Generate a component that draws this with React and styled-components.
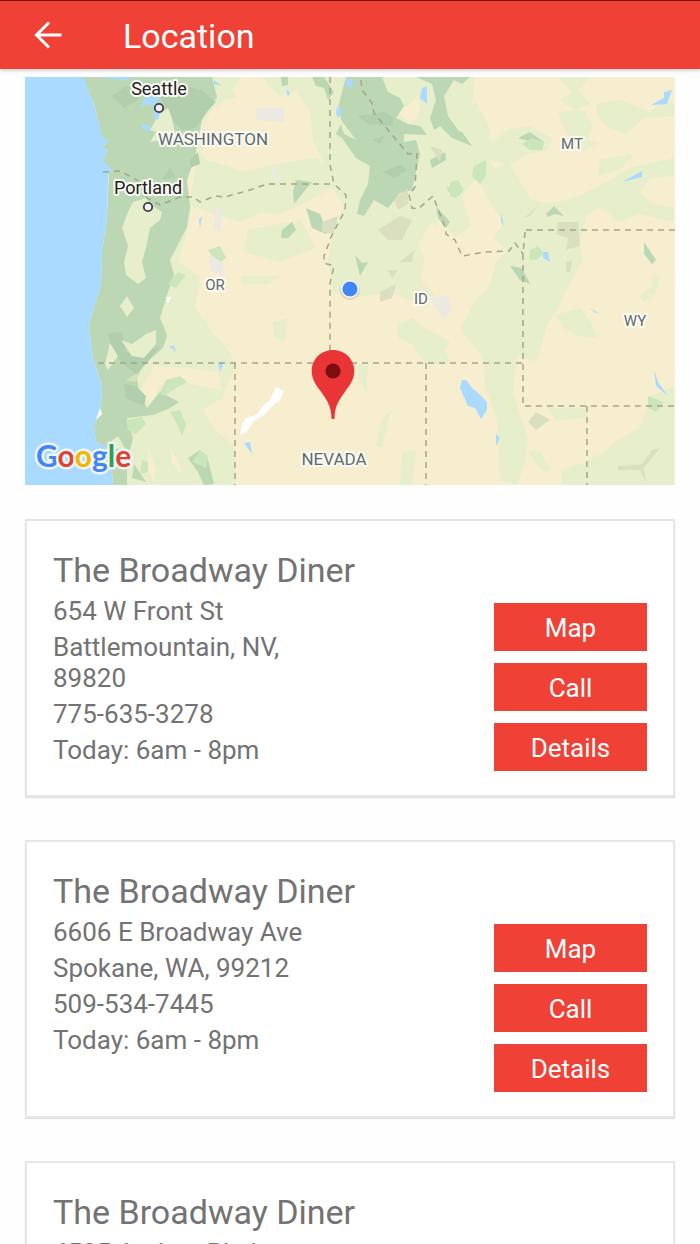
import React from 'react';
import styled, { createGlobalStyle } from 'styled-components';

const GlobalStyle = createGlobalStyle`
  * {
    box-sizing: border-box;
  }

  body {
    margin: 0;
    background: #fefefe;
    font-family: Roboto, 'Liberation Sans', sans-serif;
    color: #737373;
  }
`;

const Header = styled.header`
  display: flex;
  align-items: center;
  gap: 59px;
  height: 69px;
  padding: 0 32px;
  border-top: 1px solid #7d1713;
  background: #ef4136;
  box-shadow: 0 1px 4px rgba(0, 0, 0, 0.25);
`;

const BackButton = styled.button`
  display: flex;
  padding: 0;
  border: none;
  background: transparent;
  color: #fff;
  cursor: pointer;
`;

const HeaderTitle = styled.h1`
  margin: 0;
  padding-top: 2px;
  font-size: 34px;
  line-height: 40px;
  font-weight: 400;
  color: #fff;
`;

const Content = styled.main`
  padding: 8px 25px 42px;
`;

const Map = styled.svg`
  display: block;
  width: 100%;
  height: auto;
`;

const MapLabel = styled.text`
  font-family: Roboto, 'Liberation Sans', sans-serif;
  font-size: ${({ $size }) => $size}px;
  fill: ${({ $city }) => ($city ? '#202124' : '#5f6b6f')};
  stroke: #fbfbf3;
  stroke-width: 4px;
  stroke-linejoin: round;
  paint-order: stroke;
  text-anchor: middle;
`;

const MapLogo = styled.text`
  font-family: Lato, sans-serif;
  font-size: 30px;
  font-weight: 700;
  stroke: #eef5f2;
  stroke-width: 5px;
  stroke-linejoin: round;
  paint-order: stroke;
`;

const LocationList = styled.div`
  display: flex;
  flex-direction: column;
  gap: 43px;
  margin-top: 34px;
`;

const Card = styled.article`
  padding: 29px 26px 24px;
  border: 2px solid #e4e7e8;
  background: #fff;
  box-shadow: 0 1px 1px rgba(0, 0, 0, 0.12);
`;

const CardTitle = styled.h2`
  margin: 0 0 6px;
  font-size: 34px;
  line-height: 40px;
  font-weight: 400;
`;

const CardBody = styled.div`
  display: grid;
  grid-template-columns: 1fr 1fr;
`;

const Info = styled.div`
  display: flex;
  flex-direction: column;
  gap: 5px;
`;

const InfoLine = styled.p`
  margin: 0;
  font-size: 26px;
  line-height: 31px;
`;

const Actions = styled.div`
  display: flex;
  flex-direction: column;
  align-items: flex-end;
  gap: 12px;
  padding-top: 7px;
`;

const ActionButton = styled.button`
  width: 153px;
  height: 48px;
  padding: 3px 0 0;
  border: none;
  background: #ef4136;
  color: #fff;
  font-family: inherit;
  font-size: 26px;
  line-height: 31px;
  cursor: pointer;
`;

const locations = [
  {
    name: 'The Broadway Diner',
    street: '654 W Front St',
    city: 'Battlemountain, NV, 89820',
    phone: '775-635-3278',
    hours: 'Today: 6am - 8pm',
  },
  {
    name: 'The Broadway Diner',
    street: '6606 E Broadway Ave',
    city: 'Spokane, WA, 99212',
    phone: '509-534-7445',
    hours: 'Today: 6am - 8pm',
  },
  {
    name: 'The Broadway Diner',
    street: '4525 Andrea Blvd',
    city: 'Missoula, MT, 59808',
    phone: '406-555-0148',
    hours: 'Today: 6am - 8pm',
  },
];

// terrain, grouped by map colour
const lightGreen = [
  '212,77 242,77 232,90 236,97 224,100 210,112 204,128 212,140 200,152 206,160 222,164 245,172 268,166 300,160 318,158 335,184 318,196 300,205 280,214 262,212 240,222 215,214 192,206 186,235 178,262 200,277 195,308 213,332 228,350 236,364 222,398 203,410 215,430 235,446 235,485 120,485 120,360 170,260 190,200',
  '263,77 330,77 475,77 472,103 480,128 470,150 478,175 462,196 470,226 455,238 440,214 432,236 440,256 424,262 420,282 436,296 408,300 390,292 366,296 346,298 332,290 328,262 332,240 345,206 330,186 322,160 313,140 310,112 296,90 280,96 268,86',
  '558,77 590,77 578,90 590,104 574,110 560,100 572,92',
  '474,176 486,158 496,170 508,160 520,182 532,200 552,204 578,196 600,186 630,168 674,158 674,176 650,178 640,192 654,204 674,208 674,222 640,214 618,222 600,206 586,216 580,243 582,262 566,290 560,305 547,325 537,362 517,355 513,392 528,438 524,464 517,485 500,480 497,418 485,388 483,358 460,328 476,300 490,285 496,262 508,250 494,238 504,222 492,206 484,190',
  '596,104 620,100 650,112 664,100 674,104 674,116 644,118 626,134 610,128 598,118',
  '475,100 488,124 492,142 508,130 530,126 552,138 548,150 528,154 510,164 488,160 474,176 466,150',
  '558,112 584,110 592,126 588,140 598,142 584,152 566,134',
  '674,386 650,396 640,428 618,440 604,452 588,460 562,470 562,485 674,485',
  '548,408 588,408 586,418 556,420',
  '528,450 540,452 551,470 546,472 534,462',
  '397,325 412,318 432,332 450,342 444,352 452,364 426,364 412,344 398,338',
  '555,315 580,308 592,324 597,338 576,336 562,326',
  '392,409 382,420 376,446 382,448 386,430',
  '273,322 288,318 284,342 274,336',
  '358,364 368,366 366,392 358,378',
  '402,452 416,450 412,485 400,485',
  '240,276 280,276 268,284 244,284',
  '652,275 660,275 656,292 644,302 640,296 652,286',
  '248,230 300,220 316,248 280,262 244,252',
  '600,160 634,154 622,168 598,176',
];

const sand = [
  '154,366 186,368 218,372 222,390 200,386 176,380 160,386 150,404 140,392',
  '540,176 558,168 556,186 546,192',
  '484,104 498,108 504,112 488,114',
  '398,112 410,104 418,94 420,108 416,120 408,122',
  '148,446 156,470 154,484 148,470',
  '170,446 180,466 182,474 172,464',
  '340,120 352,133 344,128',
  '418,244 432,222 446,240 448,268 430,272',
  '540,425 560,420 570,432 588,436 588,462 560,468 545,458 530,440',
];

const forest = [
  '83,77 87,90 94,103 98,120 102,138 108,141 103,148 108,150 102,160 109,170 107,220 102,250 101,285 95,305 89,325 93,358 102,385 101,408 94,425 96,442 110,448 113,485 127,485 127,462 133,438 127,418 153,415 170,408 179,402 160,392 147,408 139,392 137,378 143,365 163,348 167,335 160,318 167,295 174,275 170,260 187,227 190,207 187,180 195,157 202,120 217,97 212,77',
  '346,77 382,77 388,92 400,98 404,106 396,118 408,124 420,126 427,135 404,134 404,142 416,140 420,154 416,172 412,190 400,193 388,208 374,200 364,216 357,214 360,200 368,184 370,166 356,158 342,138 336,134 342,122 338,108 342,92',
  '416,77 470,77 462,84 454,80 444,96 448,116 458,130 472,146 452,138 440,126 434,130 430,118 436,100 432,84',
  '312,77 324,77 334,92 328,100 324,88 316,86',
  '281,77 288,77 288,85 282,86',
  '306,208 320,214 324,224 334,222 326,234 312,228',
  '296,180 312,182 302,194 294,204 293,192',
  '282,230 292,222 296,230 288,238 281,238',
  '355,255 362,263 368,262 360,276',
  '436,206 450,222 446,228 438,218',
  '450,128 462,132 472,146 456,138',
  '518,138 530,132 544,142 542,150 532,142',
  '546,214 554,206 564,216 554,214 548,217',
  '510,266 522,268 530,284 520,280',
  '644,242 656,260 652,264 644,254',
  '430,160 445,152 446,160 432,168',
  '188,458 200,450 208,460 214,484 204,485 198,472',
  '134,464 146,482 132,478',
];

const darkForest = [
  '160,97 178,84 202,90 216,102 206,112 196,128 182,130 170,118 166,108',
  '112,96 126,86 142,92 138,100 124,108',
  '108,333 122,332 126,352 140,356 160,346 148,362 136,374 124,364 112,352',
  '124,384 136,386 146,396 144,406 126,398',
  '358,116 384,112 394,118 392,126 368,124',
  '372,140 384,136 380,144',
  '382,172 400,165 408,170 394,178',
  '190,160 198,152 200,164 190,168',
  '162,180 170,168 176,178',
];

const brightGreen = [
  '160,394 166,380 180,376 187,382 176,388 164,396',
  '126,420 142,417 146,424 136,434 128,430',
  '170,412 180,410 186,424 182,436 176,422',
  '192,462 200,450 208,456 206,468',
  '142,460 148,462 148,472 140,474',
  '450,182 458,180 464,190 456,198 450,196',
  '474,166 486,160 486,176 480,184 472,176',
  '446,186 460,190 460,196 448,192',
  '522,144 532,138 544,142 542,150 530,150',
  '530,250 538,246 544,254 536,260 529,259',
  '648,396 664,402 656,412 648,408',
  '208,250 220,246 226,258 218,264 212,256',
  '168,284 178,272 186,275 176,288',
];

const valleys = [
  '133,202 146,198 150,204 162,212 160,220 150,228 146,248 142,262 146,278 138,284 126,275 124,262 128,246 122,228 128,212',
  '158,116 168,108 172,118 176,138 150,142 156,132 150,130',
  '120,306 127,296 134,308 127,317',
  '121,340 132,344 146,334 156,330 156,344 144,358 132,356',
  '110,343 118,356 108,370 105,364',
  '338,116 350,132 356,140 344,134',
  '108,444 118,436 126,450 112,448',
];

const taupe = [
  '322,222 338,216 334,234 322,232',
  '378,230 400,216 412,220 402,240 388,240',
  '394,200 408,188 408,204 398,210',
  '430,146 442,150 440,162',
  '400,262 414,250 412,262',
  '558,222 578,222 580,246 566,250 568,238 556,234',
  '524,218 538,206 530,216',
  '536,412 550,420 536,430 528,422',
  '618,466 642,464 652,450 660,448 644,468 646,482 640,470 618,470',
  '126,380 138,373 136,382',
  '380,292 396,284 392,298 380,302',
  '388,270 398,270 392,278',
  '566,262 572,260 570,272 566,272',
];

const water = [
  '25,77 84,77 88,90 94,104 98,120 103,138 109,140 103,148 108,150 103,160 112,170 108,175 107,220 102,250 101,285 95,305 89,325 93,358 102,385 101,408 94,425 96,442 110,448 113,485 25,485',
  '100,77 130,77 128,80 112,79',
  '150,90 158,82 160,96 154,110 152,104 140,106',
  '142,124 150,126 150,132 142,128',
  '154,108 160,112 158,120 154,118',
  '214,80 222,86 214,84',
  '346,79 353,79 352,88 346,86',
  '286,90 290,92 288,97',
  '337,108 341,106 341,114 338,118 336,113',
  '422,88 427,86 427,104 420,98',
  '672,90 667,104 651,105 664,98 664,92',
  '642,171 642,177 622,182',
  '501,213 504,226 501,222',
  '543,252 548,252 550,262 543,258',
  '199,220 202,216 200,228',
  '462,380 466,380 472,388 479,394 487,402 487,410 481,419 475,408 468,406 460,388',
  '496,434 500,438 496,446',
  '218,362 224,362 220,372',
  '169,346 174,346 176,352',
  '244,443 250,442 252,454',
  '654,370 658,382 668,396 656,386',
  '590,308 600,314 594,312',
];

const urban = [
  '255,108 284,108 284,122 256,120',
  '216,208 222,208 220,232 214,228',
  '430,298 448,295 452,310 442,320 436,308',
  '210,254 224,264 222,276 210,270',
  '272,168 278,166 276,180 272,178',
];

const saltFlats = [
  '276,387 284,391 280,400 272,406 264,415 254,421 246,433 240,434 242,424 246,418 256,415 263,406 270,400',
  '100,408 102,414 96,420',
  '166,297 171,297 168,304',
];

const borders = [
  '103,172 120,171 137,180 147,198 160,205 180,197 193,197 200,202 215,196 225,197 250,190 267,184 332,184',
  '330,77 330,165 334,184 346,195 345,210 332,235 324,256 324,263 334,266 330,283 330,363',
  '98,363 523,363',
  '235,363 235,485',
  '426,363 426,485',
  '361,80 362,90 372,103 374,113 408,154 417,153 415,187 409,195 412,208 418,209 433,196 446,230 446,234 455,240 462,256 485,252 509,251 515,243 523,254',
  '526,230 675,230',
  '525,232 523,254 523,406 675,406',
  '587,406 587,485',
];

const Shapes = ({ items, fill }) => (
  <g fill={fill}>
    {items.map((points) => (
      <polygon key={points} points={points} />
    ))}
  </g>
);

const LocationMap = () => (
  <Map viewBox="25 77 650 408" role="img" aria-label="Map of nearby locations">
    <rect x="25" y="77" width="650" height="408" fill="#f6eecf" />
    <Shapes items={lightGreen} fill="#e6eecb" />
    <Shapes items={sand} fill="#f6eecf" />
    <Shapes items={forest} fill="#bbd7b4" />
    <Shapes items={darkForest} fill="#b1cfac" />
    <Shapes items={brightGreen} fill="#cbe6bb" />
    <Shapes items={valleys} fill="#e6eecb" />
    <Shapes items={taupe} fill="#dadfc0" />
    <Shapes items={urban} fill="#ebe9e2" />
    <Shapes items={water} fill="#aadaff" />
    <Shapes items={saltFlats} fill="#fff" />

    <g fill="none" stroke="#a5a58c" strokeWidth="1.5" strokeDasharray="6 5">
      {borders.map((points) => (
        <polyline key={points} points={points} />
      ))}
    </g>

    <g fill="#f4eef4" stroke="#3c4043" strokeWidth="1.8">
      <circle cx="159" cy="108" r="4.2" />
      <circle cx="148" cy="207" r="4.2" />
    </g>

    <MapLabel $city $size={18} x="159" y="95">Seattle</MapLabel>
    <MapLabel $city $size={18} x="148" y="194">Portland</MapLabel>
    <MapLabel $size={17} x="213" y="145">WASHINGTON</MapLabel>
    <MapLabel $size={17} x="334" y="465">NEVADA</MapLabel>
    <MapLabel $size={15} x="215" y="290">OR</MapLabel>
    <MapLabel $size={15} x="421" y="304">ID</MapLabel>
    <MapLabel $size={15} x="572" y="149">MT</MapLabel>
    <MapLabel $size={15} x="635" y="326">WY</MapLabel>

    {/* current position */}
    <circle cx="350" cy="290" r="10" fill="#000" opacity="0.1" />
    <circle cx="350" cy="289" r="9" fill="#fff" />
    <circle cx="350" cy="289" r="7.6" fill="#4285f4" />

    {/* selected location */}
    <path
      d="M333 350c-12 0-21.300 9.300-21.300 21 0 8 4 13.500 9.500 21 6 8.500 10 14 10.300 26.500q1.500 1.600 3 0c.3-12.500 4.300-18 10.300-26.500 5.500-7.500 9.500-13 9.500-21 0-11.700-9.300-21-21.300-21z"
      fill="#e93535"
    />
    <circle cx="333" cy="371" r="7.600" fill="#7d0f10" />

    <MapLogo x="36" y="467">
      <tspan fill="#4285f4">G</tspan>
      <tspan fill="#db4437">o</tspan>
      <tspan fill="#f4b400">o</tspan>
      <tspan fill="#4285f4">g</tspan>
      <tspan fill="#2f9e56">l</tspan>
      <tspan fill="#db4437">e</tspan>
    </MapLogo>
  </Map>
);

const LocationCard = ({ location }) => (
  <Card>
    <CardTitle>{location.name}</CardTitle>
    <CardBody>
      <Info>
        <InfoLine>{location.street}</InfoLine>
        <InfoLine>{location.city}</InfoLine>
        <InfoLine>{location.phone}</InfoLine>
        <InfoLine>{location.hours}</InfoLine>
      </Info>
      <Actions>
        <ActionButton type="button">Map</ActionButton>
        <ActionButton type="button">Call</ActionButton>
        <ActionButton type="button">Details</ActionButton>
      </Actions>
    </CardBody>
  </Card>
);

const App = () => {
  return (
    <>
      <GlobalStyle />
      <Header>
        <BackButton type="button" aria-label="Back">
          <svg width="32" height="32" viewBox="0 0 32 32" fill="none" stroke="currentColor" strokeWidth="3">
            <path d="M17 3.500 4.500 16 17 28.500M4.500 16H29.500" />
          </svg>
        </BackButton>
        <HeaderTitle>Location</HeaderTitle>
      </Header>
      <Content>
        <LocationMap />
        <LocationList>
          {locations.map((location) => (
            <LocationCard key={location.street} location={location} />
          ))}
        </LocationList>
      </Content>
    </>
  );
};

export default App;
